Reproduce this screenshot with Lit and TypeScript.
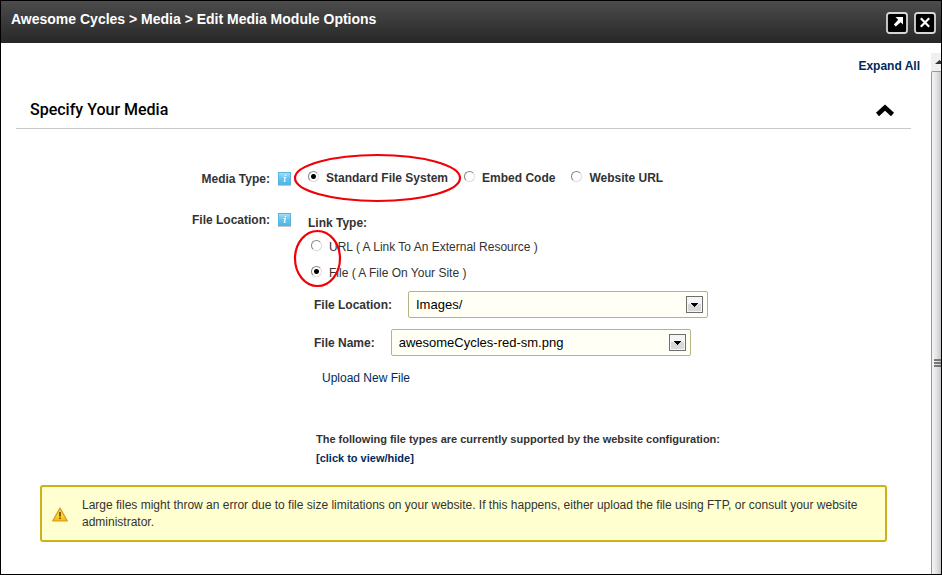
import { LitElement, html, css, svg } from "lit";
import { customElement, property } from "lit/decorators.js";

@customElement("info-tip")
class InfoTip extends LitElement {
  @property() label = "Help";

  static styles = css`
    :host { display: block; flex: none; height: 14px; }
    button { display: block; padding: 0; border: 0; background: none; cursor: help; }
    svg { display: block; }
  `;

  render() {
    return html`<button type="button" aria-label=${this.label}>
      <svg width="13" height="14" viewBox="0 0 13 14">
        <defs>
          <linearGradient id="g" x1="0" y1="0" x2="0" y2="1">
            <stop offset="0" stop-color="#a9e0f7" />
            <stop offset="0.5" stop-color="#66c4ef" />
            <stop offset="1" stop-color="#4db3e8" />
          </linearGradient>
        </defs>
        <rect x="0" y="1" width="13" height="13" fill="#c3c6c8" />
        <rect x="0.5" y="0.5" width="12" height="12" fill="url(#g)" stroke="#5ab4de" />
        <path d="M6.800 3.500h1.400M5.600 5.500h1.700L6.300 9.300h1.300" stroke="#fff" stroke-width="1.100" fill="none" />
      </svg>
    </button>`;
  }
}

@customElement("app-root")
class AppRoot extends LitElement {
  static styles = css`
    :host {
      display: block;
      font-family: "Liberation Sans", Arial, sans-serif;
      font-size: 12px;
      line-height: 20px;
      color: #333;
    }
    * { box-sizing: border-box; }
    a { color: #002b5c; text-decoration: none; }
    .window {
      display: flex;
      flex-direction: column;
      min-height: 100vh;
      border: 1px solid #000;
      background: #fff;
    }
    .titlebar {
      display: flex;
      justify-content: space-between;
      align-items: flex-start;
      height: 42px;
      padding: 8px 5px 0 10px;
      background: linear-gradient(#4c4c4c, #272727);
    }
    .title { margin: 0; font-size: 14px; line-height: 20px; color: #fff; }
    .tools { display: flex; gap: 6px; padding-top: 3px; }
    .tool { display: block; padding: 0; border: 0; background: none; }
    .tool svg { display: block; }
    .body { flex: 1; display: flex; }
    main { flex: 1; min-width: 0; padding: 13px 0 20px 15px; }
    .expand { display: block; padding-right: 11px; text-align: right; font-weight: bold; }
    .section { margin-right: 20px; }
    .section-head {
      display: flex;
      justify-content: space-between;
      align-items: center;
      height: 38px;
      margin-top: 15px;
      padding: 0 16px 0 14px;
      border-bottom: 1px solid #c8c8c8;
    }
    .section-head h2 {
      margin: 0;
      font: 500 16px/20px Roboto, sans-serif;
      color: #000;
    }
    .toggle { padding: 0; border: 0; background: none; }
    .toggle svg { display: block; }
    .form {
      display: grid;
      grid-template-columns: 275px 1fr;
      column-gap: 17px;
      row-gap: 19px;
      margin-top: 39px;
    }
    .name {
      display: flex;
      justify-content: flex-end;
      align-items: center;
      gap: 8px;
      height: 22px;
      font-weight: bold;
    }
    .bold { font-weight: bold; }
    .choices { display: flex; align-items: flex-start; height: 20px; gap: 16px; font-weight: bold; }
    .choice { position: relative; display: flex; align-items: center; gap: 7px; }
    .ring { position: absolute; pointer-events: none; overflow: visible; }
    .ring.wide { left: -14px; top: -14px; }
    .ring.tall { left: -14px; top: -7px; }
    input {
      appearance: none;
      flex: none;
      width: 11px;
      height: 11px;
      margin: 0 0 3px;
      border: 1px solid;
      border-color: #858585 #dcdcdc #dcdcdc #858585;
      border-radius: 50%;
      background: #fff;
    }
    input:checked { background: radial-gradient(circle, #000 2px, #fff 3px); }
    .details { padding-top: 4px; }
    .links { position: relative; display: grid; gap: 6px; margin: 4px 0 8px; padding-left: 3px; }
    .field { display: flex; align-items: center; margin: 0 0 11px 6px; font-weight: bold; }
    .field label { margin-right: 16px; }
    .picker { position: relative; width: 300px; }
    select {
      appearance: none;
      display: block;
      width: 100%;
      height: 27px;
      padding: 0 30px 0 7px;
      border: 1px solid #b8b387;
      border-radius: 2px;
      background: #fffff5;
      color: #000;
      font: 13px "Liberation Sans", Arial, sans-serif;
    }
    .arrow { position: absolute; right: 4px; top: 5px; pointer-events: none; }
    .upload { display: block; margin: 12px 0 0 14px; }
    .types { margin: 42px 0 0 8px; font-size: 11px; line-height: 19px; font-weight: bold; }
    .types p { margin: 0; }
    .warning {
      display: flex;
      align-items: center;
      gap: 14px;
      margin: 17px 24px 0;
      padding: 10px 20px 9px 10px;
      border: 2px solid #ccb11b;
      border-radius: 3px;
      background: #ffffcf;
      line-height: 17px;
    }
    .warning svg { flex: none; }
    .warning p { margin: 0; }
    .scroll {
      display: flex;
      flex-direction: column;
      flex: none;
      width: 10px;
      padding-top: 10px;
      overflow: hidden;
    }
    .scroll .up { display: block; flex: none; background: #f0f0f0; }
    .thumb {
      flex: 1;
      display: flex;
      align-items: center;
      justify-content: flex-end;
      border: 1px solid #979797;
      border-width: 1px 0 0 1px;
      border-radius: 2px 0 0 0;
      background: linear-gradient(90deg, #f5f5f5, #e4e4e6 50%, #c6c6ca);
    }
    .grip { display: block; margin-top: 80px; }
  `;

  private arrow() {
    return html`<svg class="arrow" width="18" height="17" viewBox="0 0 18 17" aria-hidden="true">
      <rect x="0.5" y="0.5" width="16" height="16" fill="#f5f5f5" stroke="#6e6e6e" />
      <rect x="2" y="8" width="13" height="7" fill="#d9d9d9" />
      <path d="M5 7h7v1h-1v1h-1v1H9v1H8v-1H7V9H6V8H5z" fill="#000" />
    </svg>`;
  }

  private ring(kind: string, w: number, h: number) {
    return html`<svg class="ring ${kind}" width=${w} height=${h} aria-hidden="true">
      ${svg`<ellipse cx=${w / 2} cy=${h / 2} rx=${w / 2 - 1} ry=${h / 2 - 1}
        fill="none" stroke="#f20008" stroke-width="2.200" />`}
    </svg>`;
  }

  render() {
    return html`
      <div class="window">
        <header class="titlebar">
          <h1 class="title">Awesome Cycles &gt; Media &gt; Edit Media Module Options</h1>
          <div class="tools">
            <button class="tool" type="button" aria-label="Maximize">
              <svg width="22" height="22" viewBox="0 0 22 22">
                <rect x="1" y="1" width="20" height="20" rx="2.500" fill="#000" stroke="#d6d6d6" stroke-width="1.800" />
                <path d="M9.500 5H17v7.500l-2.300-2.300-4.900 4.300-1.900-1.900 4.300-4.900z" fill="#fff" />
              </svg>
            </button>
            <button class="tool" type="button" aria-label="Close">
              <svg width="22" height="22" viewBox="0 0 22 22">
                <rect x="1" y="1" width="20" height="20" rx="2.500" fill="#000" stroke="#d6d6d6" stroke-width="1.800" />
                <path d="M6.800 6.300l8.400 8.400M15.200 6.300l-8.400 8.400" stroke="#fff" stroke-width="2.200" />
              </svg>
            </button>
          </div>
        </header>
        <div class="body">
          <main>
            <div class="expand"><a href="#">Expand All</a></div>
            <section class="section">
              <div class="section-head">
                <h2>Specify Your Media</h2>
                <button class="toggle" type="button" aria-label="Collapse section">
                  <svg width="20" height="14" viewBox="0 0 20 14">
                    <path d="M2.500 11.500L10 4.500l7.500 7" fill="none" stroke="#000" stroke-width="4.500" />
                  </svg>
                </button>
              </div>
              <form class="form">
                <div class="name">Media Type: <info-tip label="About media type"></info-tip></div>
                <div class="choices">
                  <label class="choice"><input type="radio" name="media" checked />Standard File System${this.ring("wide", 167, 48)}</label>
                  <label class="choice"><input type="radio" name="media" />Embed Code</label>
                  <label class="choice"><input type="radio" name="media" />Website URL</label>
                </div>
                <div class="name">File Location: <info-tip label="About file location"></info-tip></div>
                <div class="details">
                  <div class="bold">Link Type:</div>
                  <div class="links">
                    <label class="choice"><input type="radio" name="link" />URL ( A Link To An External Resource )</label>
                    <label class="choice"><input type="radio" name="link" checked />File ( A File On Your Site )</label>
                    ${this.ring("tall", 47, 57)}
                  </div>
                  <div class="field">
                    <label for="folder">File Location:</label>
                    <div class="picker">
                      <select id="folder"><option>Images/</option></select>${this.arrow()}
                    </div>
                  </div>
                  <div class="field">
                    <label for="file">File Name:</label>
                    <div class="picker">
                      <select id="file"><option>awesomeCycles-red-sm.png</option></select>${this.arrow()}
                    </div>
                  </div>
                  <a class="upload" href="#">Upload New File</a>
                  <div class="types">
                    <p>The following file types are currently supported by the website configuration:</p>
                    <a href="#">[click to view/hide]</a>
                  </div>
                </div>
              </form>
              <div class="warning" role="alert">
                <svg width="16" height="15" viewBox="0 0 16 15" aria-hidden="true">
                  <defs>
                    <linearGradient id="w" x1="0" y1="0" x2="0" y2="1">
                      <stop offset="0" stop-color="#f5c048" />
                      <stop offset="0.600" stop-color="#ffd52e" />
                      <stop offset="1" stop-color="#f7b900" />
                    </linearGradient>
                  </defs>
                  <path d="M8 1L15.300 14H0.700z" fill="url(#w)" stroke="#d39a2a" stroke-width="1.200" stroke-linejoin="round" />
                  <path d="M8 5v4.500M8 10.500v1.600" stroke="#6b4f08" stroke-width="1.700" />
                </svg>
                <p>Large files might throw an error due to file size limitations on your website. If this happens, either upload the file using FTP, or consult your website administrator.</p>
              </div>
            </section>
          </main>
          <div class="scroll" aria-hidden="true">
            <svg class="up" width="10" height="18" viewBox="0 0 10 18">
              <path d="M4 11L8.500 7 13 11z" fill="#333" />
            </svg>
            <div class="thumb">
              <svg class="grip" width="7" height="9" viewBox="0 0 7 9">
                <path d="M0 1h7M0 4h7M0 7h7" stroke="#555" stroke-width="1.500" />
              </svg>
            </div>
          </div>
        </div>
      </div>
    `;
  }
}
